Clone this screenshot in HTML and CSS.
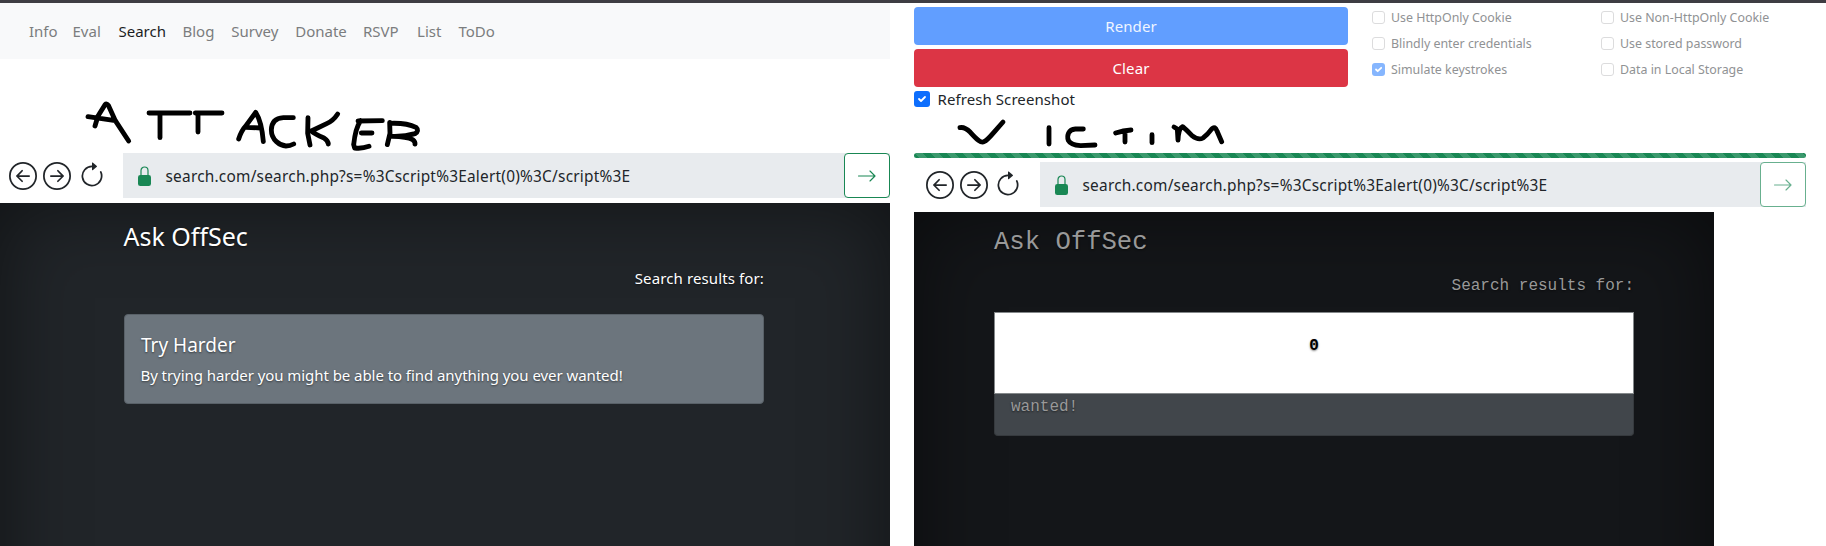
FILE: index.html
```html
<!DOCTYPE html>
<html lang="en">
<head>
<meta charset="utf-8">
<title>Search</title>
<link rel="stylesheet" href="styles.css">
</head>
<body>
<svg class="sprite" aria-hidden="true">
  <symbol id="back" viewBox="0 0 16 16"><path fill-rule="evenodd" d="M1 8a7 7 0 1 0 14 0A7 7 0 0 0 1 8zm15 0A8 8 0 1 1 0 8a8 8 0 0 1 16 0zm-4.5-.5a.5.5 0 0 1 0 1H5.707l2.147 2.146a.5.5 0 0 1-.708.708l-3-3a.5.5 0 0 1 0-.708l3-3a.5.5 0 1 1 .708.708L5.707 7.5H11.5z"/></symbol>
  <symbol id="forward" viewBox="0 0 16 16"><path fill-rule="evenodd" d="M1 8a7 7 0 1 0 14 0A7 7 0 0 0 1 8zm15 0A8 8 0 1 1 0 8a8 8 0 0 1 16 0zM4.5 7.5a.5.5 0 0 0 0 1h5.793l-2.147 2.146a.5.5 0 0 0 .708.708l3-3a.5.5 0 0 0 0-.708l-3-3a.5.5 0 1 0-.708.708L10.293 7.5H4.5z"/></symbol>
  <symbol id="reload" viewBox="0 0 16 16"><path fill-rule="evenodd" d="M8 3a5 5 0 1 0 4.546 2.914.5.5 0 0 1 .908-.417A6 6 0 1 1 8 2v1z"/><path d="M8 4.466V.534a.25.25 0 0 1 .41-.192l2.36 1.966c.12.1.12.284 0 .384L8.41 4.658A.25.25 0 0 1 8 4.466z"/></symbol>
  <symbol id="lock" viewBox="0 0 13 20"><rect y="9" width="13" height="11" rx="2.3"/><path d="M3 9.5V4.5a3.5 3.5 0 0 1 7 0v5" fill="none" stroke="currentColor" stroke-width="1.2"/></symbol>
  <symbol id="go" viewBox="0 0 18 12"><path d="M.5 6h16.5M12 1l5 5-5 5" fill="none" stroke="currentColor" stroke-width="1.15" stroke-linecap="round" stroke-linejoin="round"/></symbol>
</svg>

<main class="app">
  <section class="attacker">
    <nav class="nav">
      <a>Info</a><a>Eval</a><a class="active">Search</a><a>Blog</a><a>Survey</a><a>Donate</a><a>RSVP</a><a>List</a><a>ToDo</a>
    </nav>
    <div class="browser">
      <svg class="icon circle"><use href="#back"/></svg>
      <svg class="icon circle"><use href="#forward"/></svg>
      <svg class="icon reload"><use href="#reload"/></svg>
      <div class="address">
        <svg class="lock"><use href="#lock"/></svg>
        <span class="url">search.com/search.php?s=%3Cscript%3Ealert(0)%3C/script%3E</span>
        <button class="go"><svg><use href="#go"/></svg></button>
      </div>
    </div>
    <div class="page">
      <div class="content">
        <h1>Ask OffSec</h1>
        <p class="results">Search results for:</p>
        <article class="card">
          <h2>Try Harder</h2>
          <p>By trying harder you might be able to find anything you ever wanted!</p>
        </article>
      </div>
    </div>
  </section>

  <section class="victim">
    <div class="controls">
      <div class="actions">
        <button class="btn render">Render</button>
        <button class="btn clear">Clear</button>
        <div class="check large"><svg class="box on" viewBox="0 0 16 16"><path d="M5 8l2 2 4-4"/></svg><span>Refresh Screenshot</span></div>
      </div>
      <div class="options">
        <div class="check"><i class="box"></i><span>Use HttpOnly Cookie</span></div>
        <div class="check"><i class="box"></i><span>Use Non-HttpOnly Cookie</span></div>
        <div class="check"><i class="box"></i><span>Blindly enter credentials</span></div>
        <div class="check"><i class="box"></i><span>Use stored password</span></div>
        <div class="check"><svg class="box on" viewBox="0 0 13 13"><path d="M4 6.5l1.7 1.7L9.2 4.8"/></svg><span>Simulate keystrokes</span></div>
        <div class="check"><i class="box"></i><span>Data in Local Storage</span></div>
      </div>
    </div>
    <div class="progress"></div>
    <div class="browser">
      <svg class="icon circle"><use href="#back"/></svg>
      <svg class="icon circle"><use href="#forward"/></svg>
      <svg class="icon reload"><use href="#reload"/></svg>
      <div class="address">
        <svg class="lock"><use href="#lock"/></svg>
        <span class="url">search.com/search.php?s=%3Cscript%3Ealert(0)%3C/script%3E</span>
        <button class="go"><svg><use href="#go"/></svg></button>
      </div>
    </div>
    <div class="page dimmed">
      <div class="content">
        <h1>Ask OffSec</h1>
        <p class="results">Search results for:</p>
        <div class="covered">
          <div class="dialog">0</div>
          <p>wanted!</p>
        </div>
      </div>
    </div>
  </section>
</main>

<svg class="ink" viewBox="0 0 5478 480" role="img">
  <path d="M264 350L346 362M285 378L294 348L315 314Q320 309 325 316L346 362L386 423"/>
  <path d="M447 339H570M480 339V413M586 339H666M594 339V396"/>
  <path d="M716 417Q724 392 738 377L767 337Q785 365 790 425M738 382L783 384"/>
  <path d="M880 353H850Q815 355 814 390C814 420 840 437 858 438Q870 438 881 432"/>
  <path d="M924 353L923 400L930 435M1013 342Q1000 362 980 371L934 393Q944 402 972 414Q984 422 985 432"/>
  <path d="M1074 363L1147 362M1082 362Q1066 385 1061 434M1084 399H1116M1061 434L1064 444Q1085 447 1107 439"/>
  <path d="M1169 367L1170 400L1162 434M1170 370Q1220 368 1248 382Q1259 392 1245 401Q1215 410 1177 409Q1222 410 1238 419Q1246 426 1245 432"/>
  <path d="M2880 383Q2894 380 2911 397C2930 418 2943 430 2952 425Q2962 420 2979 400L3009 366"/>
  <path d="M3147 383V432M3250 387H3226C3205 388 3200 407 3205 421Q3212 435 3242 437L3285 435"/>
  <path d="M3347 399Q3370 391 3393 390M3375 395V426M3456 404V428"/>
  <path d="M3522 381L3532 387L3534 420Q3536 384 3548 380Q3560 390 3576 407Q3595 422 3609 414Q3622 405 3636 386Q3645 377 3651 393L3665 425"/>
</svg>
</body>
</html>
```
FILE: styles.css
```css
* { box-sizing: border-box; }
body {
  margin: 0;
  height: 546px;
  overflow: hidden;
  background: #fff;
  color: #212529;
  font: 15px/24px "Noto Sans", sans-serif;
}
h1, h2, p { margin: 0; font-weight: 400; }
button { font: inherit; }
.sprite { position: absolute; width: 0; height: 0; }
.app {
  display: grid;
  grid-template-columns: 890px 892px;
  column-gap: 24px;
  height: 546px;
  border-top: 3px solid #3e3d43;
  overflow: hidden;
}
.attacker, .victim { min-width: 0; }

.nav {
  display: grid;
  grid-template-columns: 43.5px 46px 64px 48.7px 64px 67.7px 54.2px 41.4px 60px;
  align-items: center;
  height: 56px;
  margin-bottom: 94px;
  padding-left: 29px;
  background: #f8f9fa;
  color: #7b7d7e;
}
.nav .active { color: #1c1e1f; }

.browser {
  display: flex;
  align-items: center;
  height: 45px;
  padding-left: 9px;
}
.icon { flex: none; fill: #212529; }
.circle { width: 28px; height: 28px; margin-right: 6px; }
.reload { width: 28px; height: 28px; margin: 0 16px 0 1px; }
.address {
  display: flex;
  flex: 1;
  align-items: center;
  height: 45px;
  margin-left: 1px;
  padding-left: 15px;
  background: #e8ebee;
}
.lock { width: 13px; height: 20px; margin: 0 14.5px 0 0; fill: #198754; color: #198754; }
.url { flex: 1; padding-top: 2px; font-size: 15.4px; letter-spacing: .23px; }
.go {
  display: grid;
  place-items: center;
  width: 46px;
  height: 45px;
  border: 1px solid #198754;
  border-radius: 4px;
  background: #fff;
  color: #198754;
}
.go svg { width: 18px; height: 12px; }

.page {
  height: 500px;
  margin-top: 5px;
  background: #212529;
  box-shadow: inset 0 0 80px rgba(0, 0, 0, .5);
  color: #fff;
  text-shadow: 0 1px 2px rgba(0, 0, 0, .5);
}
.content { width: 640px; margin: 0 auto; padding-top: 16px; }
.attacker .content { margin-left: 124px; }
h1 { font-size: 25px; line-height: 34px; }
.attacker h1 { margin-left: -.5px; }
.results { padding-top: 14px; text-align: right; }
.attacker .results { padding-top: 13px; letter-spacing: .12px; }
.card {
  height: 90px;
  margin-top: 24px;
  padding: 18px 16px;
  border: 1px solid #596168;
  border-radius: 4px;
  background: #6c757d;
}
.card h2 { margin-bottom: 6px; font-size: 19px; line-height: 24px; }
.card p { margin-left: -.5px; letter-spacing: -.06px; }

.controls { display: flex; height: 150px; padding-top: 4px; }
.actions { width: 434px; }
.btn {
  display: block;
  width: 100%;
  height: 38px;
  margin-bottom: 4px;
  border: 0;
  border-radius: 4px;
  color: #fff;
  letter-spacing: .1px;
}
.render { background: #619eff; color: #eff5ff; }
.clear { background: #dc3545; }
.check { display: flex; align-items: center; }
.box {
  flex: none;
  width: 13px;
  height: 13px;
  margin-right: 6px;
  border: 1px solid #dcdcdd;
  border-radius: 3px;
}
.box.on { border: 0; background: #86b6fe; }
.box path { fill: none; stroke: #fff; stroke-width: 1.8; stroke-linecap: round; stroke-linejoin: round; }
.large .box { width: 16px; height: 16px; margin-right: 7.5px; background: #0d6efd; }
.large { height: 16px; letter-spacing: .08px; }
.options {
  display: grid;
  grid-template-columns: 229px 180px;
  grid-auto-rows: 26px;
  align-content: start;
  padding: 3px 0 0 24px;
  margin-top: -6px;
  color: #909294;
  font-size: 12.4px;
}
.options span { padding-top: 2px; }
.progress {
  height: 5px;
  margin-bottom: 4px;
  border-radius: 3px;
  background: linear-gradient(45deg, rgba(255,255,255,.15) 25%, transparent 25%, transparent 50%, rgba(255,255,255,.15) 50%, rgba(255,255,255,.15) 75%, transparent 75%) 0 0 / 16px 16px #198754;
}
.victim .browser { padding-left: 12px; }
.victim .reload { margin: 0 17px 0 0; }
.victim .go { border-color: #68b08f; color: #68b08f; }
.dimmed {
  width: 800px;
  background: #141619;
  color: #999;
  font-family: "Liberation Mono", monospace;
  font-size: 16px;
}
.dimmed h1 { font-size: 25.6px; line-height: 30px; }
.dimmed .results { padding-top: 16px; }
.covered {
  height: 124px;
  margin-top: 14px;
  border: 1px solid #363a3e;
  border-top: 0;
  border-radius: 4px;
  background: #41464b;
}
.covered p { padding: 1px 0 0 16px; }
.dialog {
  height: 82px;
  margin: 0 -1px;
  padding-top: 21px;
  border: 1px solid #84888a;
  background: #fff;
  color: #000;
  font-weight: 700;
  text-align: center;
}
/* Handwritten labels drawn across the toolbar area */
.ink {
  position: absolute;
  top: 0;
  left: 0;
  width: 1826px;
  height: 160px;
  fill: none;
  stroke: #000;
  stroke-width: 14.5;
  stroke-linecap: round;
  stroke-linejoin: round;
  pointer-events: none;
}
```
